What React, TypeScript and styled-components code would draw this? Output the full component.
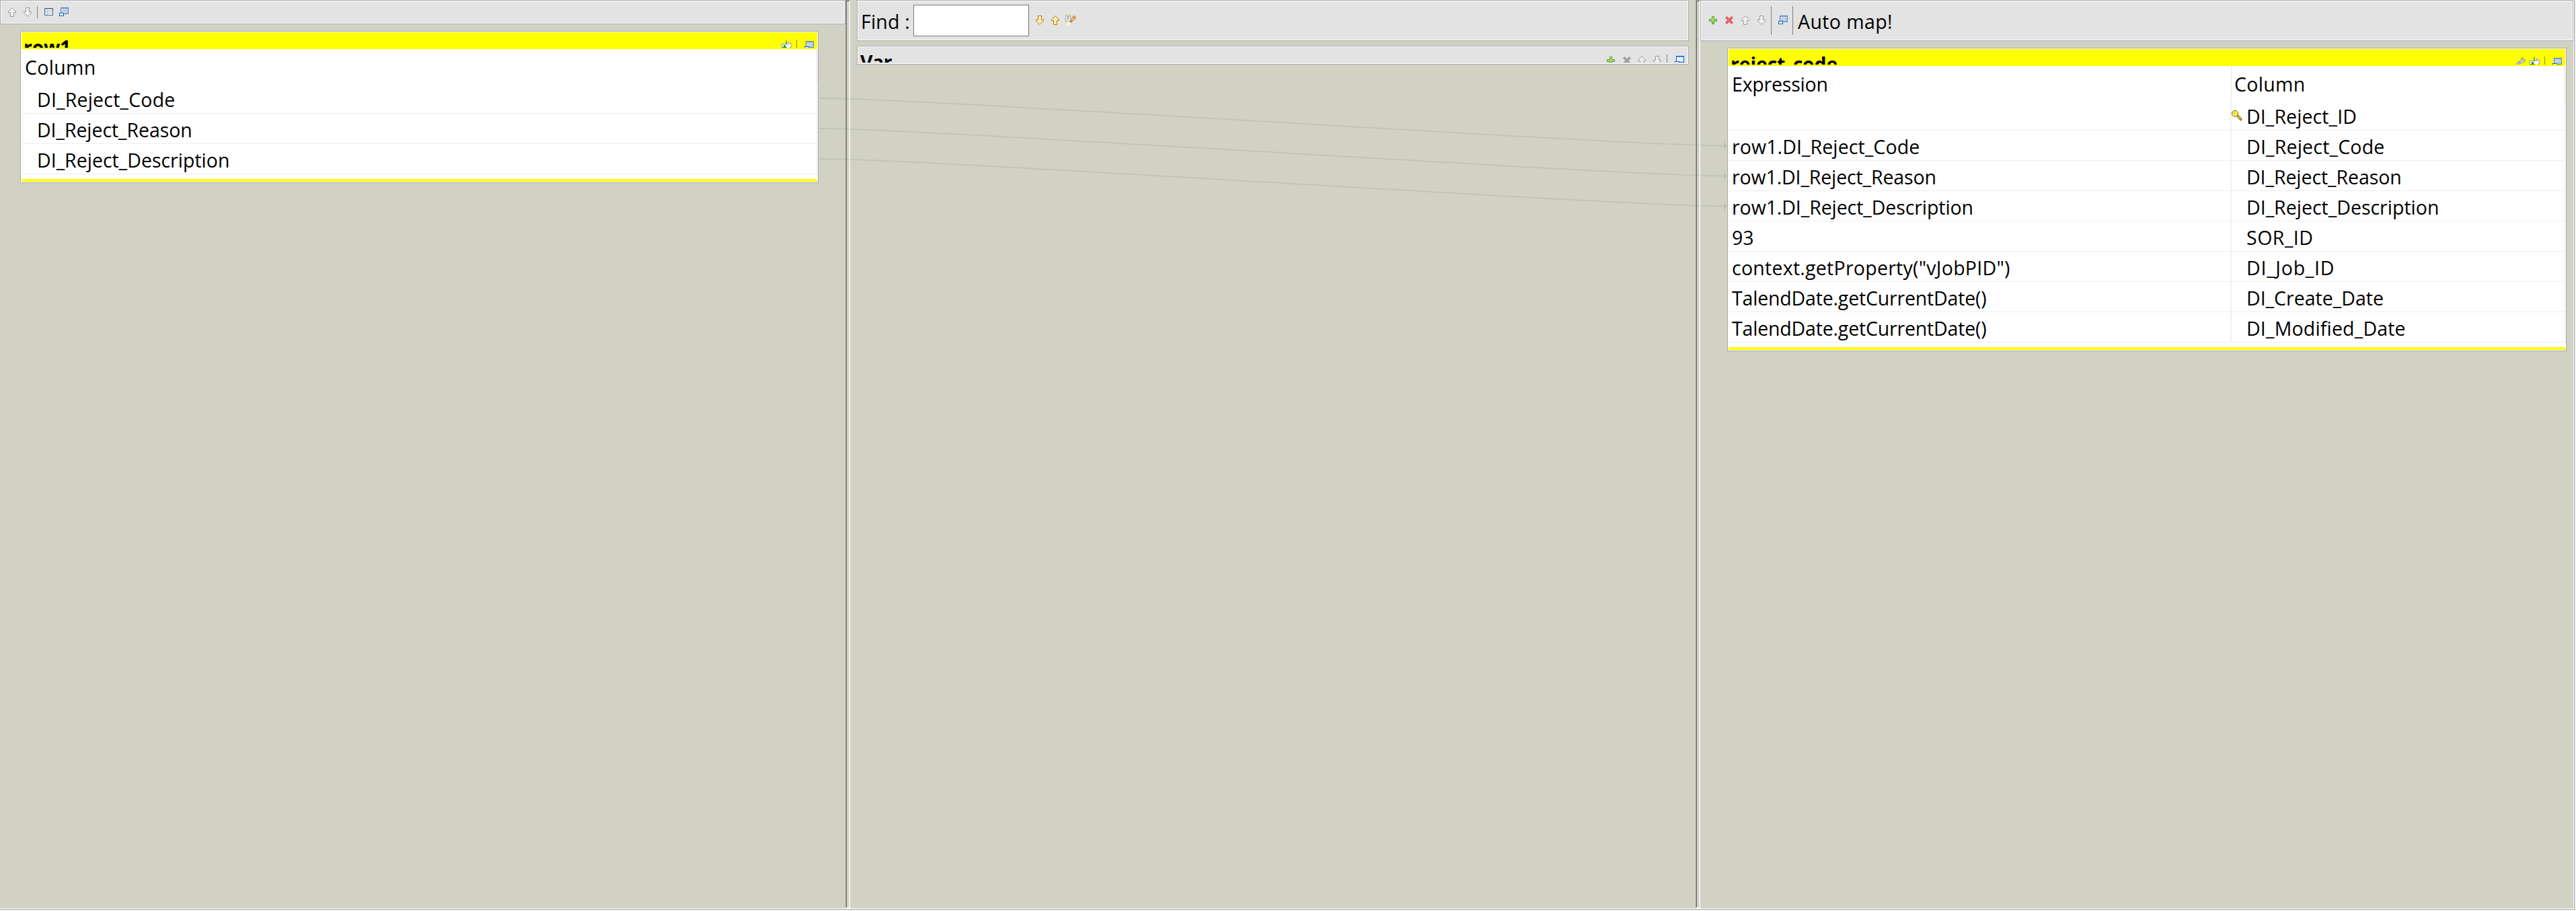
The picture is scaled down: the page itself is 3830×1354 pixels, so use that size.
import React from "react";
import styled, { createGlobalStyle, css } from "styled-components";

const CANVAS = "#d1d2c4";
const EDGE = "#a9aab0";

const Global = createGlobalStyle`
  body { margin: 0; background: #eeeeee; }
  *, *::before, *::after { box-sizing: border-box; }
`;

const Frame = styled.div`
  width: 3828px;
  height: 1352px;
  border: solid ${EDGE};
  border-width: 0 1px 1px 0;
  font-family: "Open Sans", "Noto Sans", sans-serif;
  font-size: 28.5px;
  color: #000;
`;

const Workspace = styled.main`
  position: relative;
  display: grid;
  grid-template-columns: 1257px 7px 1257px 7px 1fr;
  height: 1351px;
  background: ${CANVAS};
  border: solid #fff;
  border-width: 0 1px 1px 0;
`;

const Zone = styled.section<{ $inset?: string }>`
  position: relative;
  display: flex;
  flex-direction: column;
  min-width: 0;
  padding: ${(p) => p.$inset ?? "0"};
`;

const Sash = styled.div`
  position: relative;
  border: 1px solid;
  border-color: #a0a0a0 #fff #fff #a0a0a0;
  &::after {
    content: "";
    display: block;
    height: 100%;
    border: 1px solid;
    border-color: #696969 #e3e3e3 #e3e3e3 #696969;
  }
`;

const etched = css`
  border: 1px solid ${EDGE};
  box-shadow: inset 0 0 0 1px #fff;
`;

const Toolbar = styled.div<{ $height: number }>`
  ${etched}
  display: flex;
  align-items: flex-start;
  flex: none;
  height: ${(p) => p.$height}px;
  background: #e3e3e3;
`;

const Title = styled.strong<{ $track?: number }>`
  font-weight: 700;
  line-height: 38px;
  white-space: nowrap;
  margin: 3px auto 0 3px;
  letter-spacing: ${(p) => p.$track ?? 0}px;
`;

const Slot = styled.span<{ $left: number; $top: number }>`
  display: block;
  flex: none;
  width: 16px;
  height: 16px;
  margin: ${(p) => p.$top}px 0 0 ${(p) => p.$left}px;
  svg { display: block; }
`;

const Divider = styled.i<{ $left: number; $top: number; $height: number; $color?: string }>`
  flex: none;
  width: 1px;
  height: ${(p) => p.$height}px;
  margin: ${(p) => p.$top}px 0 0 ${(p) => p.$left}px;
  background: ${(p) => p.$color ?? "#808080"};
`;

const Label = styled.span<{ $left: number; $track?: number }>`
  margin: 12px 0 0 ${(p) => p.$left}px;
  line-height: 38px;
  white-space: nowrap;
  letter-spacing: ${(p) => p.$track ?? 0}px;
`;

const FindInput = styled.input`
  width: 172px;
  height: 47px;
  margin: 6px 0 0 auto;
  padding: 0 6px;
  border: 1px solid #7a7a7a;
  background: #fff;
  font: inherit;
  outline: none;
`;

const FindField = styled.label`
  display: flex;
  align-items: flex-start;
  width: 255px;
`;

const VarPanel = styled.div`
  ${etched}
  flex: none;
  height: 28px;
  margin-top: 7px;
  padding: 1px 1px 2px;
  background: #e3e3e3;
`;

const TableCard = styled.article<{ $margin: string }>`
  ${etched}
  flex: none;
  margin: ${(p) => p.$margin};
  padding: 1px;
  background: #fff;
`;

const TitleBar = styled.header`
  height: 25px;
  padding-bottom: 2px;
  background: #ffff00;
`;

const TitleClip = styled.div`
  display: flex;
  align-items: flex-start;
  height: 23px;
  padding-right: 4px;
  overflow: hidden;
`;

const FootBar = styled.div`
  height: 4px;
  margin-top: 7px;
  background: #ffff00;
`;

const Row = styled.div<{ $cols: string; $head?: boolean }>`
  display: grid;
  grid-template-columns: ${(p) => p.$cols};
  height: ${(p) => (p.$head ? 51 : 45)}px;
  border-bottom: ${(p) => (p.$head ? "0" : "1px solid #ededed")};
`;

const Cell = styled.div<{ $head?: boolean; $pad: number; $line?: number; $track?: number; $lead?: boolean }>`
  display: flex;
  align-items: flex-start;
  min-width: 0;
  padding: ${(p) => (p.$head ? 8 : 5)}px 0 0 ${(p) => p.$pad}px;
  border-right: ${(p) => p.$line ?? 1}px solid ${(p) => (p.$head ? "#e4e4e4" : "#ecf0f8")};
  box-shadow: ${(p) => (p.$lead ? "inset 1px 0 0 #fff, inset 2px 0 0 #eef1f8" : "none")};
  line-height: 38px;
  white-space: nowrap;
  letter-spacing: ${(p) => p.$track ?? 0}px;
`;

const KeySlot = styled.span`
  width: 22px;
  height: 26px;
  padding-top: 10px;
  svg { display: block; }
`;

const Links = styled.svg`
  position: absolute;
  left: 0;
  top: 0;
  pointer-events: none;
`;

type Tone = "gray" | "gold";
const tones = {
  gray: { line: "#9a9a9a", fill: "#f0f0f0" },
  gold: { line: "#b8780c", fill: "#ffeeb0" },
};

function Arrow({ dir, tone = "gray" }: { dir: "up" | "down"; tone?: Tone }) {
  const t = tones[tone];
  return (
    <svg width="16" height="16" viewBox="0 0 16 16">
      <path
        transform={dir === "down" ? "translate(0 16) scale(1 -1)" : undefined}
        d="M8 1.6L2.5 7.1V8.5H5.5V14.5H10.5V8.5H13.5V7.1Z"
        fill={t.fill}
        stroke={t.line}
      />
    </svg>
  );
}

function Plus() {
  return (
    <svg width="16" height="16" viewBox="0 0 16 16">
      <defs>
        <linearGradient id="leaf" x1="0" y1="0" x2="0" y2="1">
          <stop offset="0" stopColor="#d8e86a" />
          <stop offset="1" stopColor="#8fc43c" />
        </linearGradient>
      </defs>
      <path d="M6.5 2.5H9.5V6.5H13.5V9.5H9.5V13.5H6.5V9.5H2.5V6.5H6.5Z" fill="url(#leaf)" stroke="#4f9a50" />
    </svg>
  );
}

function Cross({ off }: { off?: boolean }) {
  return (
    <svg width="16" height="16" viewBox="0 0 16 16">
      <path
        d="M4.5 2.5L8 6L11.5 2.5L13.5 4.5L10 8L13.5 11.5L11.5 13.5L8 10L4.5 13.5L2.5 11.5L6 8L2.5 4.5Z"
        fill={off ? "#a0a0a0" : "#f0696c"}
        stroke={off ? "#a0a0a0" : "#d3494f"}
        strokeLinejoin="round"
      />
    </svg>
  );
}

function Grid() {
  return (
    <svg width="16" height="16" viewBox="0 0 16 16" shapeRendering="crispEdges">
      <rect x="1" y="2" width="13" height="11" fill="#4d6185" />
      <rect x="2" y="3" width="11" height="1" fill="#a9b6cf" />
      <rect x="2" y="4" width="11" height="8" fill="#fff" />
      <path d="M2 5.5H13M2 7.5H13M2 9.5H13M5.5 4V12" stroke="#b4bfd0" />
    </svg>
  );
}

function Restore({ bright }: { bright?: boolean }) {
  return (
    <svg width="16" height="16" viewBox="0 0 16 16" shapeRendering="crispEdges">
      <defs>
        <linearGradient id={bright ? "paneB" : "paneA"} x1="0" y1="0" x2="1" y2="1">
          <stop offset="0" stopColor={bright ? "#fff" : "#d9dde2"} />
          <stop offset="1" stopColor={bright ? "#cfe4fb" : "#adc2dc"} />
        </linearGradient>
      </defs>
      <rect x="3.5" y="1.5" width="11" height="9" fill={bright ? "url(#paneB)" : "url(#paneA)"} stroke={bright ? "#0a5ed2" : "#5585c4"} />
      <path d="M4 2.5H14" stroke={bright ? "#5f9be6" : "#82a7d6"} />
      <rect x="1.5" y="9.5" width="6" height="4" fill="#fff" stroke="#0a5ed2" />
    </svg>
  );
}

function Brush() {
  return (
    <svg width="16" height="16" viewBox="0 0 16 16">
      <rect x=".5" y=".5" width="7" height="9" fill="#fbfbf4" stroke="#b9ae7d" />
      <path d="M2 2.5H6M2 4.5H6M2 6.5H5" stroke="#5d80c0" />
      <path d="M1 15.5L3 10.5L6 9.5L9 12.5L7.5 15.5Z" fill="#fff3b8" />
      <path d="M5.5 9L8 7.5L10.5 10L9 12.5Z" fill="#8d8d98" />
      <path d="M8.5 7.5L10.5 3L13 1.5L15.3 2.5V5L13.5 7.5L10.5 9.5Z" fill="#f5b667" stroke="#cf7f30" strokeWidth=".8" />
      <circle cx="12.8" cy="4" r=".8" fill="#4e5f86" />
    </svg>
  );
}

function Schema() {
  return (
    <svg width="16" height="16" viewBox="0 0 16 16" shapeRendering="crispEdges">
      <path d="M.5 5.5H10.5V2.5H11.5L15.5 7.5L11.5 12.5H.5Z" fill="#fff" stroke="#9d9d9d" />
      <rect x="6" y="0" width="2" height="6" fill="#8c8c8c" />
      <rect x="1" y="10" width="7" height="2" fill="#0b9a3e" />
      <rect x="3" y="7" width="3" height="3" fill="#0b9a3e" />
    </svg>
  );
}

function Wrench() {
  return (
    <svg width="16" height="16" viewBox="0 0 16 16">
      <path d="M1 11L6 6L9 9L5 14H0Z" fill="#a9c3e6" stroke="#7e9cc8" strokeWidth=".6" />
      <path d="M6 7L9.5 4.5V2L12 .5L11.5 3.5L13 4.5L15 3V6L12 8H9.5L8 9.5Z" fill="#d6d6d0" stroke="#7d7d78" strokeWidth=".9" />
    </svg>
  );
}

function Key() {
  return (
    <svg width="16" height="16" viewBox="0 0 16 16">
      <path d="M7 8.5L9 6.8L14.7 12V14.5H12.5L11.5 13L10.5 12.5L9.5 11Z" fill="#f2b632" stroke="#4c3a0c" strokeWidth=".9" />
      <path d="M3 .5H7.2L9.3 2.8V6.5L7 9H3.3L.6 6.5V3Z" fill="#ffee45" stroke="#6b5a14" strokeWidth=".9" />
      <circle cx="3.8" cy="3.6" r=".8" fill="#fff" stroke="#a08a20" strokeWidth=".5" />
    </svg>
  );
}

type Item = { text: string; track?: number };

const inputColumns: Item[] = [
  { text: "DI_Reject_Code", track: 0.2 },
  { text: "DI_Reject_Reason", track: -0.07 },
  { text: "DI_Reject_Description" },
];

const outputRows: { expression: Item; column: Item; key?: boolean }[] = [
  { expression: { text: "" }, column: { text: "DI_Reject_ID", track: 0.1 }, key: true },
  { expression: { text: "row1.DI_Reject_Code", track: 0.1 }, column: { text: "DI_Reject_Code", track: 0.2 } },
  { expression: { text: "row1.DI_Reject_Reason", track: -0.13 }, column: { text: "DI_Reject_Reason", track: -0.07 } },
  { expression: { text: "row1.DI_Reject_Description", track: -0.08 }, column: { text: "DI_Reject_Description" } },
  { expression: { text: "93" }, column: { text: "SOR_ID", track: 0.5 } },
  { expression: { text: 'context.getProperty("vJobPID")', track: 0.26 }, column: { text: "DI_Job_ID", track: 0.75 } },
  { expression: { text: "TalendDate.getCurrentDate()", track: -0.18 }, column: { text: "DI_Create_Date" } },
  { expression: { text: "TalendDate.getCurrentDate()", track: -0.18 }, column: { text: "DI_Modified_Date", track: 0.18 } },
];

const OUT_COLS = "748px 1fr";

const linkStarts = [146, 191, 236];

function MappingLinks() {
  return (
    <Links width="3826" height="400" viewBox="0 0 3826 400">
      {linkStarts.map((y) => (
        <g key={y}>
          <path
            d={`M1217 ${y}C1375 ${y} 2408 ${y + 70.5} 2566 ${y + 70.5}`}
            fill="none"
            stroke="#c3c4b4"
            strokeWidth="2"
          />
          <path d={`M2563 ${y + 65}L2568 ${y + 70.5}L2563 ${y + 76}Z`} fill="#c0c1b1" />
        </g>
      ))}
    </Links>
  );
}

function InputZone() {
  return (
    <Zone>
      <Toolbar $height={36}>
        <Slot $left={9} $top={9}><Arrow dir="up" /></Slot>
        <Slot $left={7} $top={9}><Arrow dir="down" /></Slot>
        <Divider $left={6} $top={8} $height={18} />
        <Slot $left={9} $top={9}><Grid /></Slot>
        <Slot $left={6} $top={9}><Restore /></Slot>
      </Toolbar>
      <TableCard $margin="10px 40px 0 30px">
        <TitleBar>
          <TitleClip>
            <Title $track={-0.3}>row1</Title>
            <Slot $left={0} $top={12}><Schema /></Slot>
            <Divider $left={6} $top={11} $height={12} $color="#8a8a20" />
            <Slot $left={10} $top={12}><Restore /></Slot>
          </TitleClip>
        </TitleBar>
        <Row $cols="1fr" $head>
          <Cell $head $pad={5} $track={0.3}>Column</Cell>
        </Row>
        {inputColumns.map((c) => (
          <Row key={c.text} $cols="1fr">
            <Cell $pad={23} $track={c.track} $lead>{c.text}</Cell>
          </Row>
        ))}
        <FootBar />
      </TableCard>
    </Zone>
  );
}

function VariableZone() {
  return (
    <Zone $inset="0 10px">
      <Toolbar $height={61}>
        <FindField>
          <Label $left={5} $track={0.2}>Find :</Label>
          <FindInput />
        </FindField>
        <Slot $left={8} $top={21}><Arrow dir="down" tone="gold" /></Slot>
        <Slot $left={7} $top={21}><Arrow dir="up" tone="gold" /></Slot>
        <Slot $left={7} $top={21}><Brush /></Slot>
      </Toolbar>
      <VarPanel>
        <TitleClip>
          <Title $track={-0.6}>Var</Title>
          <Slot $left={0} $top={12}><Plus /></Slot>
          <Slot $left={8} $top={12}><Cross off /></Slot>
          <Slot $left={6} $top={12}><Arrow dir="up" /></Slot>
          <Slot $left={7} $top={12}><Arrow dir="down" /></Slot>
          <Divider $left={6} $top={11} $height={12} />
          <Slot $left={10} $top={12}><Restore bright /></Slot>
        </TitleClip>
      </VarPanel>
    </Zone>
  );
}

function OutputZone() {
  return (
    <Zone>
      <Toolbar $height={61}>
        <Slot $left={10} $top={21}><Plus /></Slot>
        <Slot $left={8} $top={21}><Cross /></Slot>
        <Slot $left={8} $top={21}><Arrow dir="up" /></Slot>
        <Slot $left={8} $top={21}><Arrow dir="down" /></Slot>
        <Divider $left={6} $top={8} $height={43} />
        <Slot $left={9} $top={21}><Restore /></Slot>
        <Divider $left={6} $top={8} $height={43} />
        <Label $left={7} $track={0.4}>Auto map!</Label>
      </Toolbar>
      <TableCard $margin="10px 10px 0 40px">
        <TitleBar>
          <TitleClip>
            <Title $track={-0.2}>reject_code</Title>
            <Slot $left={0} $top={12}><Wrench /></Slot>
            <Slot $left={6} $top={12}><Schema /></Slot>
            <Divider $left={6} $top={11} $height={12} $color="#8a8a20" />
            <Slot $left={10} $top={12}><Restore /></Slot>
          </TitleClip>
        </TitleBar>
        <Row $cols={OUT_COLS} $head>
          <Cell $head $pad={5} $track={-0.2}>Expression</Cell>
          <Cell $head $pad={4} $track={0.3}>Column</Cell>
        </Row>
        {outputRows.map((r) => (
          <Row key={r.column.text} $cols={OUT_COLS}>
            <Cell $pad={5} $line={2} $track={r.expression.track}>{r.expression.text}</Cell>
            <Cell $pad={0} $track={r.column.track}>
              <KeySlot>{r.key && <Key />}</KeySlot>
              {r.column.text}
            </Cell>
          </Row>
        ))}
        <FootBar />
      </TableCard>
    </Zone>
  );
}

export default function App() {
  return (
    <>
      <Global />
      <Frame>
        <Workspace>
          <MappingLinks />
          <InputZone />
          <Sash />
          <VariableZone />
          <Sash />
          <OutputZone />
        </Workspace>
      </Frame>
    </>
  );
}
